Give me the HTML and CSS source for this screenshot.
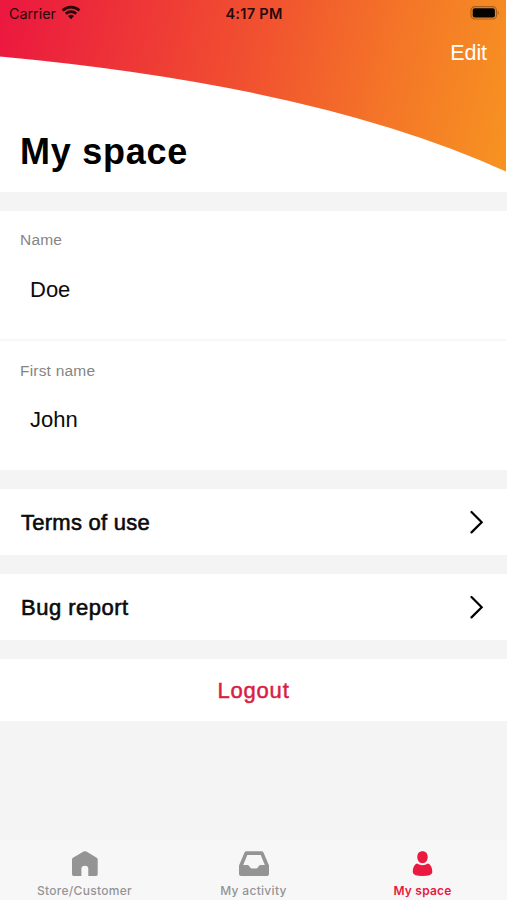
FILE: index.html
```html
<!DOCTYPE html>
<html lang="en">
<head>
<meta charset="utf-8">
<title>My space</title>
<link rel="stylesheet" href="styles.css">
</head>
<body>
<div class="app">
  <header class="header">
    <svg class="wave" viewBox="0 0 507 192" width="507" height="192">
      <defs>
        <linearGradient id="g" gradientUnits="userSpaceOnUse" x1="0" y1="40" x2="506" y2="150">
          <stop offset="0" stop-color="#eb193f"/>
          <stop offset=".5" stop-color="#f1532f"/>
          <stop offset=".75" stop-color="#f47528"/>
          <stop offset="1" stop-color="#f79221"/>
        </linearGradient>
      </defs>
      <path d="M0 0H506V171.500Q318 86 0 56.500Z" fill="url(#g)"/>
    </svg>
    <div class="status">
      <div class="carrier"><span class="carrier-name">Carrier</span>
        <svg class="wifi" viewBox="0 0 20 16" width="20" height="16" fill="none" stroke="#27090c" stroke-width="2.700">
          <path d="M1.600 5.400C6.400 .9 13.600 .9 18.400 5.400M4.800 8.700C7.800 5.900 12.200 5.900 15.200 8.700"/>
          <path d="M7 11Q10 8.500 13 11L10 14.200Z" fill="#27090c" stroke="none"/>
        </svg>
      </div>
      <span class="time">4:17 PM</span>
      <svg class="battery" viewBox="0 0 30 14" width="30" height="14">
        <rect x="1" y=".7" width="25.500" height="12.300" rx="3.800" fill="none" stroke="#a5601d" stroke-width="1.200"/>
        <rect x="2.700" y="2.300" width="22.200" height="9.200" rx="2" fill="#050300"/>
        <path d="M27.800 4.700Q29.800 6.900 27.800 9.100Z" fill="#a5601d"/>
      </svg>
    </div>
    <a class="edit">Edit</a>
    <h1 class="title">My space</h1>
  </header>
  <section class="fields">
    <div class="field"><div class="label">Name</div><div class="value">Doe</div></div>
    <div class="field"><div class="label">First name</div><div class="value">John</div></div>
  </section>
  <div class="row"><span class="row-text terms">Terms of use</span>
    <svg class="chevron" viewBox="0 0 14 24" width="14" height="24"><path d="M1.500 2L11.700 12.200L1.500 22.400"/></svg></div>
  <div class="row"><span class="row-text bug">Bug report</span>
    <svg class="chevron" viewBox="0 0 14 24" width="14" height="24"><path d="M1.500 2L11.700 12.200L1.500 22.400"/></svg></div>
  <div class="logout"><span class="logout-text">Logout</span></div>
  <nav class="tabs">
    <div class="tab">
      <svg viewBox="0 0 32 26" width="32" height="26"><path d="M3 8.400Q3 7.400 4 6.800L14.600 .6Q16 -.1 17.400 .6L27.700 6.800Q28.700 7.400 28.700 8.400V23.300Q28.700 25 27 25H19.300V18Q19.300 14.700 16 14.700Q12.400 14.700 12.400 18V25H4.700Q3 25 3 23.300Z"/></svg>
      <span class="tab-text">Store/Customer</span>
    </div>
    <div class="tab">
      <svg viewBox="0 0 32 26" width="32" height="26"><path fill-rule="evenodd" d="M8.500 .3H23.500Q24.900 .3 25.500 1.600L31 14.500V23Q31 25 29 25H3Q1 25 1 23V14.500L6.500 1.600Q7.100 .3 8.500 .3ZM9.300 4L5.200 14H9.500Q11 14 11.500 15.500Q12.200 17.500 14 17.500H18Q19.800 17.500 20.500 15.500Q21 14 22.500 14H26.800L22.700 4Z"/></svg>
      <span class="tab-text">My activity</span>
    </div>
    <div class="tab active">
      <svg viewBox="0 0 32 26" width="32" height="26"><path d="M15.500 .2C19 .2 20.700 2.600 20.700 6C20.700 9.600 18.500 12.200 15.500 12.200C12.500 12.200 10.300 9.600 10.300 6C10.300 2.600 12 .2 15.500 .2ZM10 12.600Q15.500 15.800 21 12.600C24 13.500 25.300 17.500 25.300 21.500Q24.500 25 15.500 25Q6.500 25 5.800 21.500C5.800 17.500 7 13.500 10 12.600Z"/></svg>
      <span class="tab-text">My space</span>
    </div>
  </nav>
</div>
</body>
</html>
```
FILE: styles.css
```css
* { box-sizing: border-box; }
body { margin: 0; background: #f4f4f4; font-family: "Liberation Sans", sans-serif; color: #0b0b0c; }
.app { width: 507px; height: 900px; display: flex; flex-direction: column; overflow: hidden; }
.header { position: relative; height: 192px; background: #fff; display: flex; flex-direction: column; flex: none; }
.wave { position: absolute; left: 0; top: 0; }
.status { position: relative; height: 28px; display: grid; grid-template-columns: 1fr auto 1fr; align-items: center; padding: 0 7px 0 9px; font-family: Inter, sans-serif; font-size: 14.500px; line-height: 28px; color: #27090c; }
.carrier { display: flex; align-items: center; gap: 5px; }
.carrier-name { font-size: 14.300px; }
.wifi { margin-top: -2px; }
.time { font-weight: 600; letter-spacing: .3px; margin-right: 1px; }
.battery { justify-self: end; margin-top: -2px; }
.edit { position: relative; align-self: flex-end; margin: 12px 20px 0 0; color: #fff; font-size: 21.500px; line-height: 26px; letter-spacing: -.1px; }
.title { position: relative; margin: 64px 0 0 20px; font-size: 36px; line-height: 44px; letter-spacing: .75px; color: #000; }
.fields { margin-top: 19px; background: #fff; height: 259px; flex: none; }
.field { height: 128px; padding: 19px 20px 0; }
.field + .field { border-top: 2px solid #f8f8f8; }
.label { font-size: 15.500px; line-height: 20px; letter-spacing: .2px; color: #858585; }
.value { margin: 26px 0 0 10px; font-size: 22px; line-height: 28px; }
.field + .field .label { margin-top: 1px; }
.field + .field .value { margin-top: 25px; }
.row { flex: none; margin-top: 19px; height: 66px; padding: 0 23px 0 21px; background: #fff; display: flex; align-items: center; justify-content: space-between; }
.row-text { margin-top: 2px; font-size: 22px; line-height: 28px; -webkit-text-stroke: .6px currentColor; }
.terms { letter-spacing: .25px; }
.bug { letter-spacing: .5px; }
.chevron { fill: none; stroke: #000; stroke-width: 2.200; stroke-linecap: round; }
.logout { flex: none; margin-top: 19px; height: 62px; background: #fff; display: flex; align-items: center; justify-content: center; color: #d91e45; font-size: 22px; }
.logout-text { margin-top: 2px; letter-spacing: .8px; -webkit-text-stroke: .5px currentColor; }
.tabs { flex: none; margin-top: auto; height: 60px; background: #f7f7f7; display: grid; grid-template-columns: repeat(3, 1fr); }
.tab { display: flex; flex-direction: column; align-items: center; padding-top: 11px; color: #949494; }
.tab svg { fill: currentColor; display: block; }
.tab-text { margin-top: 6px; font-family: Inter, sans-serif; font-size: 12px; line-height: 16px; font-weight: 500; letter-spacing: .3px; }
.active { color: #e91940; }
.active .tab-text { font-weight: 600; letter-spacing: .2px; }
```
